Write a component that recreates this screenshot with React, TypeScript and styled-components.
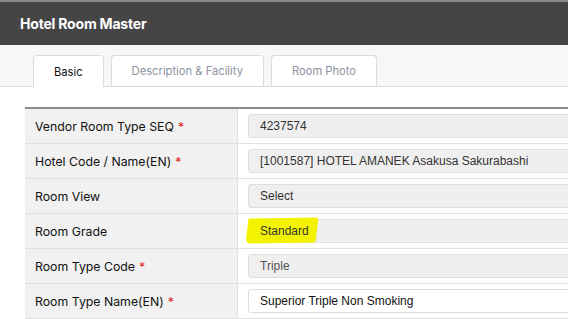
import React, { FC } from 'react';
import styled, { createGlobalStyle } from 'styled-components';

const GlobalStyle = createGlobalStyle`
  html, body {
    margin: 0;
    padding: 0;
    background: #fff;
    overflow: hidden;
  }
  body {
    font-family: Inter, "Noto Sans", sans-serif;
  }
`;

type Row = {
  label: string;
  required?: boolean;
  value: string;
  editable?: boolean;
  muted?: boolean;
  marked?: boolean;
};

const rows: Row[] = [
  { label: 'Vendor Room Type SEQ', required: true, value: '4237574' },
  { label: 'Hotel Code / Name(EN)', required: true, value: '[1001587] HOTEL AMANEK Asakusa Sakurabashi' },
  { label: 'Room View', value: 'Select' },
  { label: 'Room Grade', value: 'Standard', marked: true },
  { label: 'Room Type Code', required: true, value: 'Triple', muted: true },
  { label: 'Room Type Name(EN)', required: true, value: 'Superior Triple Non Smoking', editable: true },
];

const tabs = ['Basic', 'Description & Facility', 'Room Photo'];

const App: FC = () => {
  return (
    <Page>
      <GlobalStyle />
      {/* header */}
      <Header>
        <Title>Hotel Room Master</Title>
      </Header>
      {/* tabs */}
      <TabBar>
        {tabs.map((t, i) => (
          <Tab key={t} $active={i === 0}>
            {t}
          </Tab>
        ))}
      </TabBar>
      {/* form table */}
      <Content>
        <Table>
          {rows.map((r) => (
            <FormRow key={r.label}>
              <Label>
                {r.label}
                {r.required && <Req>*</Req>}
              </Label>
              <Cell>
                <Field $editable={r.editable} $muted={r.muted}>
                  {r.marked ? <Marker>{r.value}</Marker> : r.value}
                </Field>
              </Cell>
            </FormRow>
          ))}
        </Table>
      </Content>
    </Page>
  );
};

const Page = styled.div`
  width: 568px;
  height: 319px;
  overflow: hidden;
`;

const Header = styled.div`
  height: 43px;
  background: #454545;
  border-top: 2px solid #8a8a8a;
  display: flex;
  align-items: center;
  padding-left: 20px;
`;

const Title = styled.h1`
  margin: 0;
  color: #fff;
  font-size: 14px;
  font-weight: 700;
  letter-spacing: -0.2px;
`;

const TabBar = styled.div`
  display: flex;
  gap: 7px;
  align-items: flex-end;
  padding: 10px 0 0 33px;
  background: #f7f7f9;
  border-bottom: 1px solid #dcdcdc;
  height: 31px;
`;

const Tab = styled.div<{ $active?: boolean }>`
  box-sizing: border-box;
  padding: 0 20px;
  display: flex;
  align-items: center;
  font-size: 11.2px;
  color: ${(p) => (p.$active ? '#111' : '#8d93a0')};
  background: #fff;
  border: 1px solid #dcdcdc;
  border-bottom: none;
  border-radius: 4px 4px 0 0;
  margin-bottom: ${(p) => (p.$active ? '-1px' : '0')};
  height: ${(p) => (p.$active ? '32px' : '31px')};
`;

const Content = styled.div`
  padding: 20px 0 0 25px;
`;

const Table = styled.div`
  width: 700px;
  border-top: 2px solid #8c8c8c;
`;

const FormRow = styled.div`
  display: grid;
  grid-template-columns: 213px 1fr;
  height: 34px;
  border-bottom: 1px solid #e0e0e0;
`;

const Label = styled.div`
  background: #f1f1f1;
  border-right: 1px solid #e0e0e0;
  display: flex;
  align-items: center;
  padding-left: 10px;
  font-size: 12.3px;
  color: #111;
`;

const Req = styled.span`
  color: #e02020;
  margin-left: 4px;
`;

const Cell = styled.div`
  display: flex;
  align-items: center;
  padding-left: 10px;
`;

const Field = styled.div<{ $editable?: boolean; $muted?: boolean }>`
  flex: 1;
  height: 24px;
  box-sizing: border-box;
  display: flex;
  align-items: center;
  padding-left: 11px;
  border: 1px solid #dedede;
  border-radius: 3px;
  background: ${(p) => (p.$editable ? '#fff' : '#efefef')};
  font-family: "Liberation Sans", Arial, sans-serif;
  font-size: 12px;
  color: ${(p) => (p.$muted ? '#555' : p.$editable ? '#111' : '#333')};
`;

const Marker = styled.span`
  position: relative;
  z-index: 0;
  &::before {
    content: '';
    position: absolute;
    z-index: -1;
    left: -13px;
    right: -8px;
    top: -6px;
    bottom: -5px;
    background: #f3f300;
    border-radius: 1px 3px 2px 5px;
    transform: rotate(-1deg) skewX(-8deg);
  }
`;

export default App;
